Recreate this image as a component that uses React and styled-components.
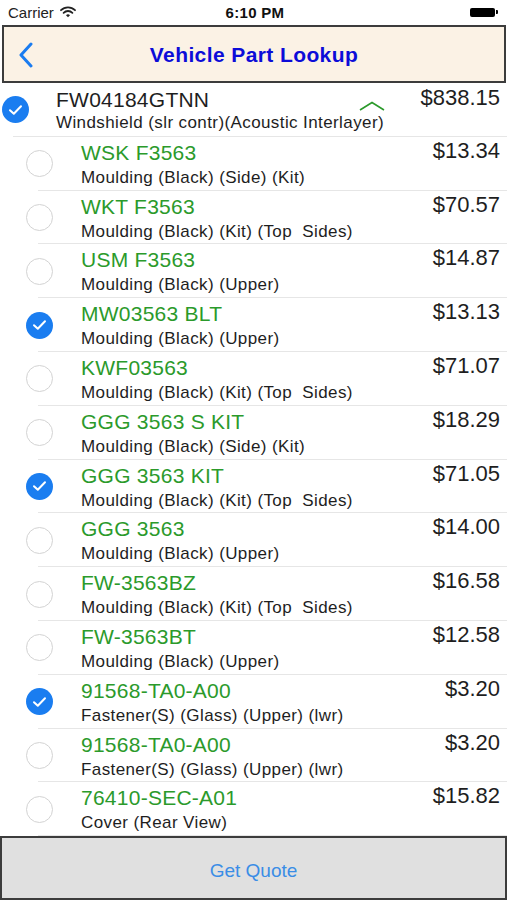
import React, { useState } from 'react';
import styled, { createGlobalStyle } from 'styled-components';

const GlobalStyle = createGlobalStyle`
  html, body { margin: 0; padding: 0; background: #fff; }
  body { font-family: "Liberation Sans", Arial, sans-serif; }
`;

const parts = [
  { id: 'WSK F3563', desc: 'Moulding (Black) (Side) (Kit)', price: '$13.34' },
  { id: 'WKT F3563', desc: 'Moulding (Black) (Kit) (Top\u00a0 Sides)', price: '$70.57' },
  { id: 'USM F3563', desc: 'Moulding (Black) (Upper)', price: '$14.87' },
  { id: 'MW03563 BLT', desc: 'Moulding (Black) (Upper)', price: '$13.13', checked: true },
  { id: 'KWF03563', desc: 'Moulding (Black) (Kit) (Top\u00a0 Sides)', price: '$71.07' },
  { id: 'GGG 3563 S KIT', desc: 'Moulding (Black) (Side) (Kit)', price: '$18.29' },
  { id: 'GGG 3563 KIT', desc: 'Moulding (Black) (Kit) (Top\u00a0 Sides)', price: '$71.05', checked: true },
  { id: 'GGG 3563', desc: 'Moulding (Black) (Upper)', price: '$14.00' },
  { id: 'FW-3563BZ', desc: 'Moulding (Black) (Kit) (Top\u00a0 Sides)', price: '$16.58' },
  { id: 'FW-3563BT', desc: 'Moulding (Black) (Upper)', price: '$12.58' },
  { id: '91568-TA0-A00', desc: 'Fastener(S) (Glass) (Upper) (lwr)', price: '$3.20', checked: true },
  { id: '91568-TA0-A00', desc: 'Fastener(S) (Glass) (Upper) (lwr)', price: '$3.20' },
  { id: '76410-SEC-A01', desc: 'Cover (Rear View)', price: '$15.82' },
];

const Screen = styled.div`
  width: 507px;
  height: 900px;
  display: flex;
  flex-direction: column;
  overflow: hidden;
  color: #1e1e1e;
`;

const StatusBar = styled.div`
  height: 25px;
  display: grid;
  grid-template-columns: 1fr auto 1fr;
  align-items: center;
  padding: 0 9px 0 8px;
  font-size: 15px;
`;

const Carrier = styled.div`
  display: flex;
  align-items: center;
  gap: 6px;
  color: #222;
`;

const Clock = styled.div`
  font-weight: bold;
  font-size: 15px;
  letter-spacing: 0.3px;
  color: #111;
  padding-left: 4px;
`;

const Battery = styled.div`
  justify-self: end;
  display: flex;
  align-items: center;
`;

const BatteryBody = styled.div`
  width: 25px;
  height: 9px;
  border-radius: 2px;
  background: #000;
`;

const BatteryNub = styled.div`
  width: 2px;
  height: 4px;
  margin-left: 1px;
  background: #000;
  border-radius: 0 1px 1px 0;
`;

const NavBar = styled.div`
  height: 54px;
  margin: 0 1px 0 2px;
  border: 2px solid #3c3c3c;
  background: #fbf2e5;
  display: grid;
  grid-template-columns: 48px 1fr 48px;
  align-items: center;
`;

const Back = styled.div`
  display: flex;
  align-items: center;
  padding-left: 14px;
  padding-top: 2px;
`;

const Title = styled.div`
  text-align: center;
  font-weight: bold;
  font-size: 21px;
  letter-spacing: 0.4px;
  color: #0c0cd8;
  padding-top: 2px;
`;

const List = styled.div`
  flex: 1;
  display: flex;
  flex-direction: column;
`;

const MainRow = styled.div`
  height: 54px;
  position: relative;
  display: grid;
  grid-template-columns: 56px 1fr auto;
  &::after {
    content: '';
    position: absolute;
    left: 13px;
    right: 0;
    bottom: 0;
    height: 1px;
    background: #e6e6e6;
  }
`;

const SubRow = styled.div`
  height: 53.8px;
  position: relative;
  display: grid;
  grid-template-columns: 81px 1fr auto;
  &::after {
    content: '';
    position: absolute;
    left: 38px;
    right: 0;
    bottom: 0;
    height: 1px;
    background: #e6e6e6;
  }
`;

const CheckCell = styled.div`
  display: flex;
  align-items: center;
  padding-left: ${(p) => p.$inset}px;
`;

const Circle = styled.div`
  width: 27px;
  height: 27px;
  border-radius: 50%;
  box-sizing: border-box;
  display: flex;
  align-items: center;
  justify-content: center;
  background: ${(p) => (p.$on ? '#1a7df0' : '#fff')};
  border: ${(p) => (p.$on ? 'none' : '1.5px solid #d3d3d3')};
`;

const Texts = styled.div`
  display: flex;
  flex-direction: column;
  padding-top: ${(p) => p.$top}px;
  min-width: 0;
`;

const PartNo = styled.div`
  font-size: 21px;
  line-height: 24px;
  letter-spacing: 0.25px;
  color: ${(p) => (p.$green ? '#2b9a2b' : '#1e1e1e')};
  white-space: nowrap;
`;

const Desc = styled.div`
  font-size: 17px;
  line-height: 19px;
  letter-spacing: 0.4px;
  margin-top: ${(p) => p.$gap}px;
  color: #1e1e1e;
  white-space: nowrap;
`;

const Price = styled.div`
  font-size: 22px;
  line-height: 24px;
  padding: ${(p) => p.$top}px 7px 0 0;
  color: #1e1e1e;
`;

const Expand = styled.div`
  position: absolute;
  left: 359px;
  top: 14px;
`;

const QuoteButton = styled.button`
  height: 64px;
  width: 100%;
  margin: 0;
  padding: 5px 0 0;
  border: 2px solid #3c3c3c;
  background: #e0e0e0;
  color: #3a8de6;
  font-family: "Liberation Sans", Arial, sans-serif;
  font-size: 19px;
  cursor: pointer;
`;

const Check = () => (
  <svg width="15" height="12" viewBox="0 0 15 12">
    <path d="M2 6.2 L5.8 9.8 L13 2.2" fill="none" stroke="#fff" strokeWidth="2" strokeLinecap="round" strokeLinejoin="round" />
  </svg>
);

const Wifi = () => (
  <svg width="16" height="12" viewBox="0 0 16 12">
    <path d="M1 4.2 A10 10 0 0 1 15 4.2" fill="none" stroke="#222" strokeWidth="1.8" strokeLinecap="round" />
    <path d="M3.6 6.8 A6.3 6.3 0 0 1 12.4 6.8" fill="none" stroke="#222" strokeWidth="1.8" strokeLinecap="round" />
    <path d="M6 9.3 L8 11.3 L10 9.3 A2.8 2.8 0 0 0 6 9.3 Z" fill="#222" />
  </svg>
);

export default function App() {
  const [open, setOpen] = useState(true);
  return (
    <Screen>
      <GlobalStyle />
      <StatusBar>
        <Carrier>
          Carrier
          <Wifi />
        </Carrier>
        <Clock>6:10 PM</Clock>
        <Battery>
          <BatteryBody />
          <BatteryNub />
        </Battery>
      </StatusBar>
      <NavBar>
        <Back>
          <svg width="16" height="26" viewBox="0 0 16 26">
            <path d="M13 2 L3 13 L13 24" fill="none" stroke="#1a7cf0" strokeWidth="3" strokeLinecap="round" strokeLinejoin="round" />
          </svg>
        </Back>
        <Title>Vehicle Part Lookup</Title>
        <div />
      </NavBar>
      <List>
        <MainRow onClick={() => setOpen(!open)}>
          <CheckCell $inset={2}>
            <Circle $on>
              <Check />
            </Circle>
          </CheckCell>
          <Texts $top={5}>
            <PartNo>FW04184GTNN</PartNo>
            <Desc $gap={1}>Windshield (slr contr)(Acoustic Interlayer)</Desc>
          </Texts>
          <Price $top={3}>$838.15</Price>
          <Expand>
            <svg width="26" height="10" viewBox="0 0 26 10">
              <path d={open ? 'M1 9 L13 1.5 L25 9' : 'M1 1 L13 8.5 L25 1'} fill="none" stroke="#2b9a2b" strokeWidth="1.6" />
            </svg>
          </Expand>
        </MainRow>
        {open &&
          parts.map((p, i) => (
            <SubRow key={i}>
              <CheckCell $inset={26}>
                <Circle $on={p.checked}>{p.checked && <Check />}</Circle>
              </CheckCell>
              <Texts $top={4}>
                <PartNo $green>{p.id}</PartNo>
                <Desc $gap={3}>{p.desc}</Desc>
              </Texts>
              <Price $top={2}>{p.price}</Price>
            </SubRow>
          ))}
      </List>
      <QuoteButton>Get Quote</QuoteButton>
    </Screen>
  );
}
